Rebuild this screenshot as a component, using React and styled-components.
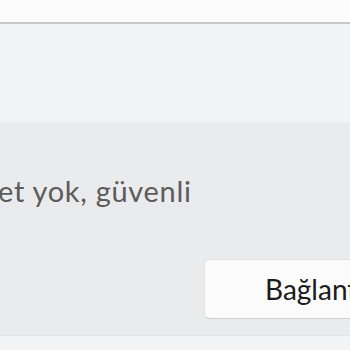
import React from "react";
import styled, { createGlobalStyle } from "styled-components";

const GlobalStyle = createGlobalStyle`
  html, body {
    margin: 0;
    padding: 0;
    background: #fcfcfc;
    overflow: hidden;
  }
  body {
    font-family: Lato, "Noto Sans", sans-serif;
  }
`;

const Page = styled.div`
  width: 350px;
  height: 350px;
  display: flex;
  flex-direction: column;
  overflow: hidden;
`;

const TitleStrip = styled.div`
  height: 22px;
  background: #fcfcfc;
`;

const Divider = styled.div`
  height: 2px;
  background: #c7c7c7;
`;

const HeaderCard = styled.div`
  height: 98px;
  background: #f2f3f4;
  border-bottom: 1px solid #eceef0;
`;

const Section = styled.div`
  height: 212px;
  background: #eaebed;
  display: flex;
  flex-direction: column;
  overflow: hidden;
`;

const Status = styled.div`
  margin: 50px 0 0 -${(p) => p.$shift}px;
  font-size: 29px;
  letter-spacing: 0.7px;
  line-height: 36px;
  color: #5c5c5c;
  white-space: nowrap;
`;

const Actions = styled.div`
  display: flex;
  justify-content: flex-start;
  margin-top: 50px;
  padding-left: 204px;
`;

const Button = styled.button`
  flex: none;
  width: 220px;
  height: 60px;
  padding: 0 0 0 60px;
  text-align: left;
  font-family: inherit;
  font-size: 28px;
  color: #1b1b1b;
  background: #fbfbfb;
  border: 1px solid #e3e3e3;
  border-bottom-color: #cfcfcf;
  border-radius: 6px;
  white-space: nowrap;
`;

const Footer = styled.div`
  flex: 1;
  background: #f3f4f6;
  border-top: 1px solid #e2e4e6;
`;

export default function App() {
  return (
    <Page>
      <GlobalStyle />
      <TitleStrip />
      <Divider />
      <HeaderCard />
      <Section>
        <Status $shift={2}>et yok, güvenli</Status>
        <Actions>
          <Button>Bağlantıyı kes</Button>
        </Actions>
      </Section>
      <Footer />
    </Page>
  );
}
